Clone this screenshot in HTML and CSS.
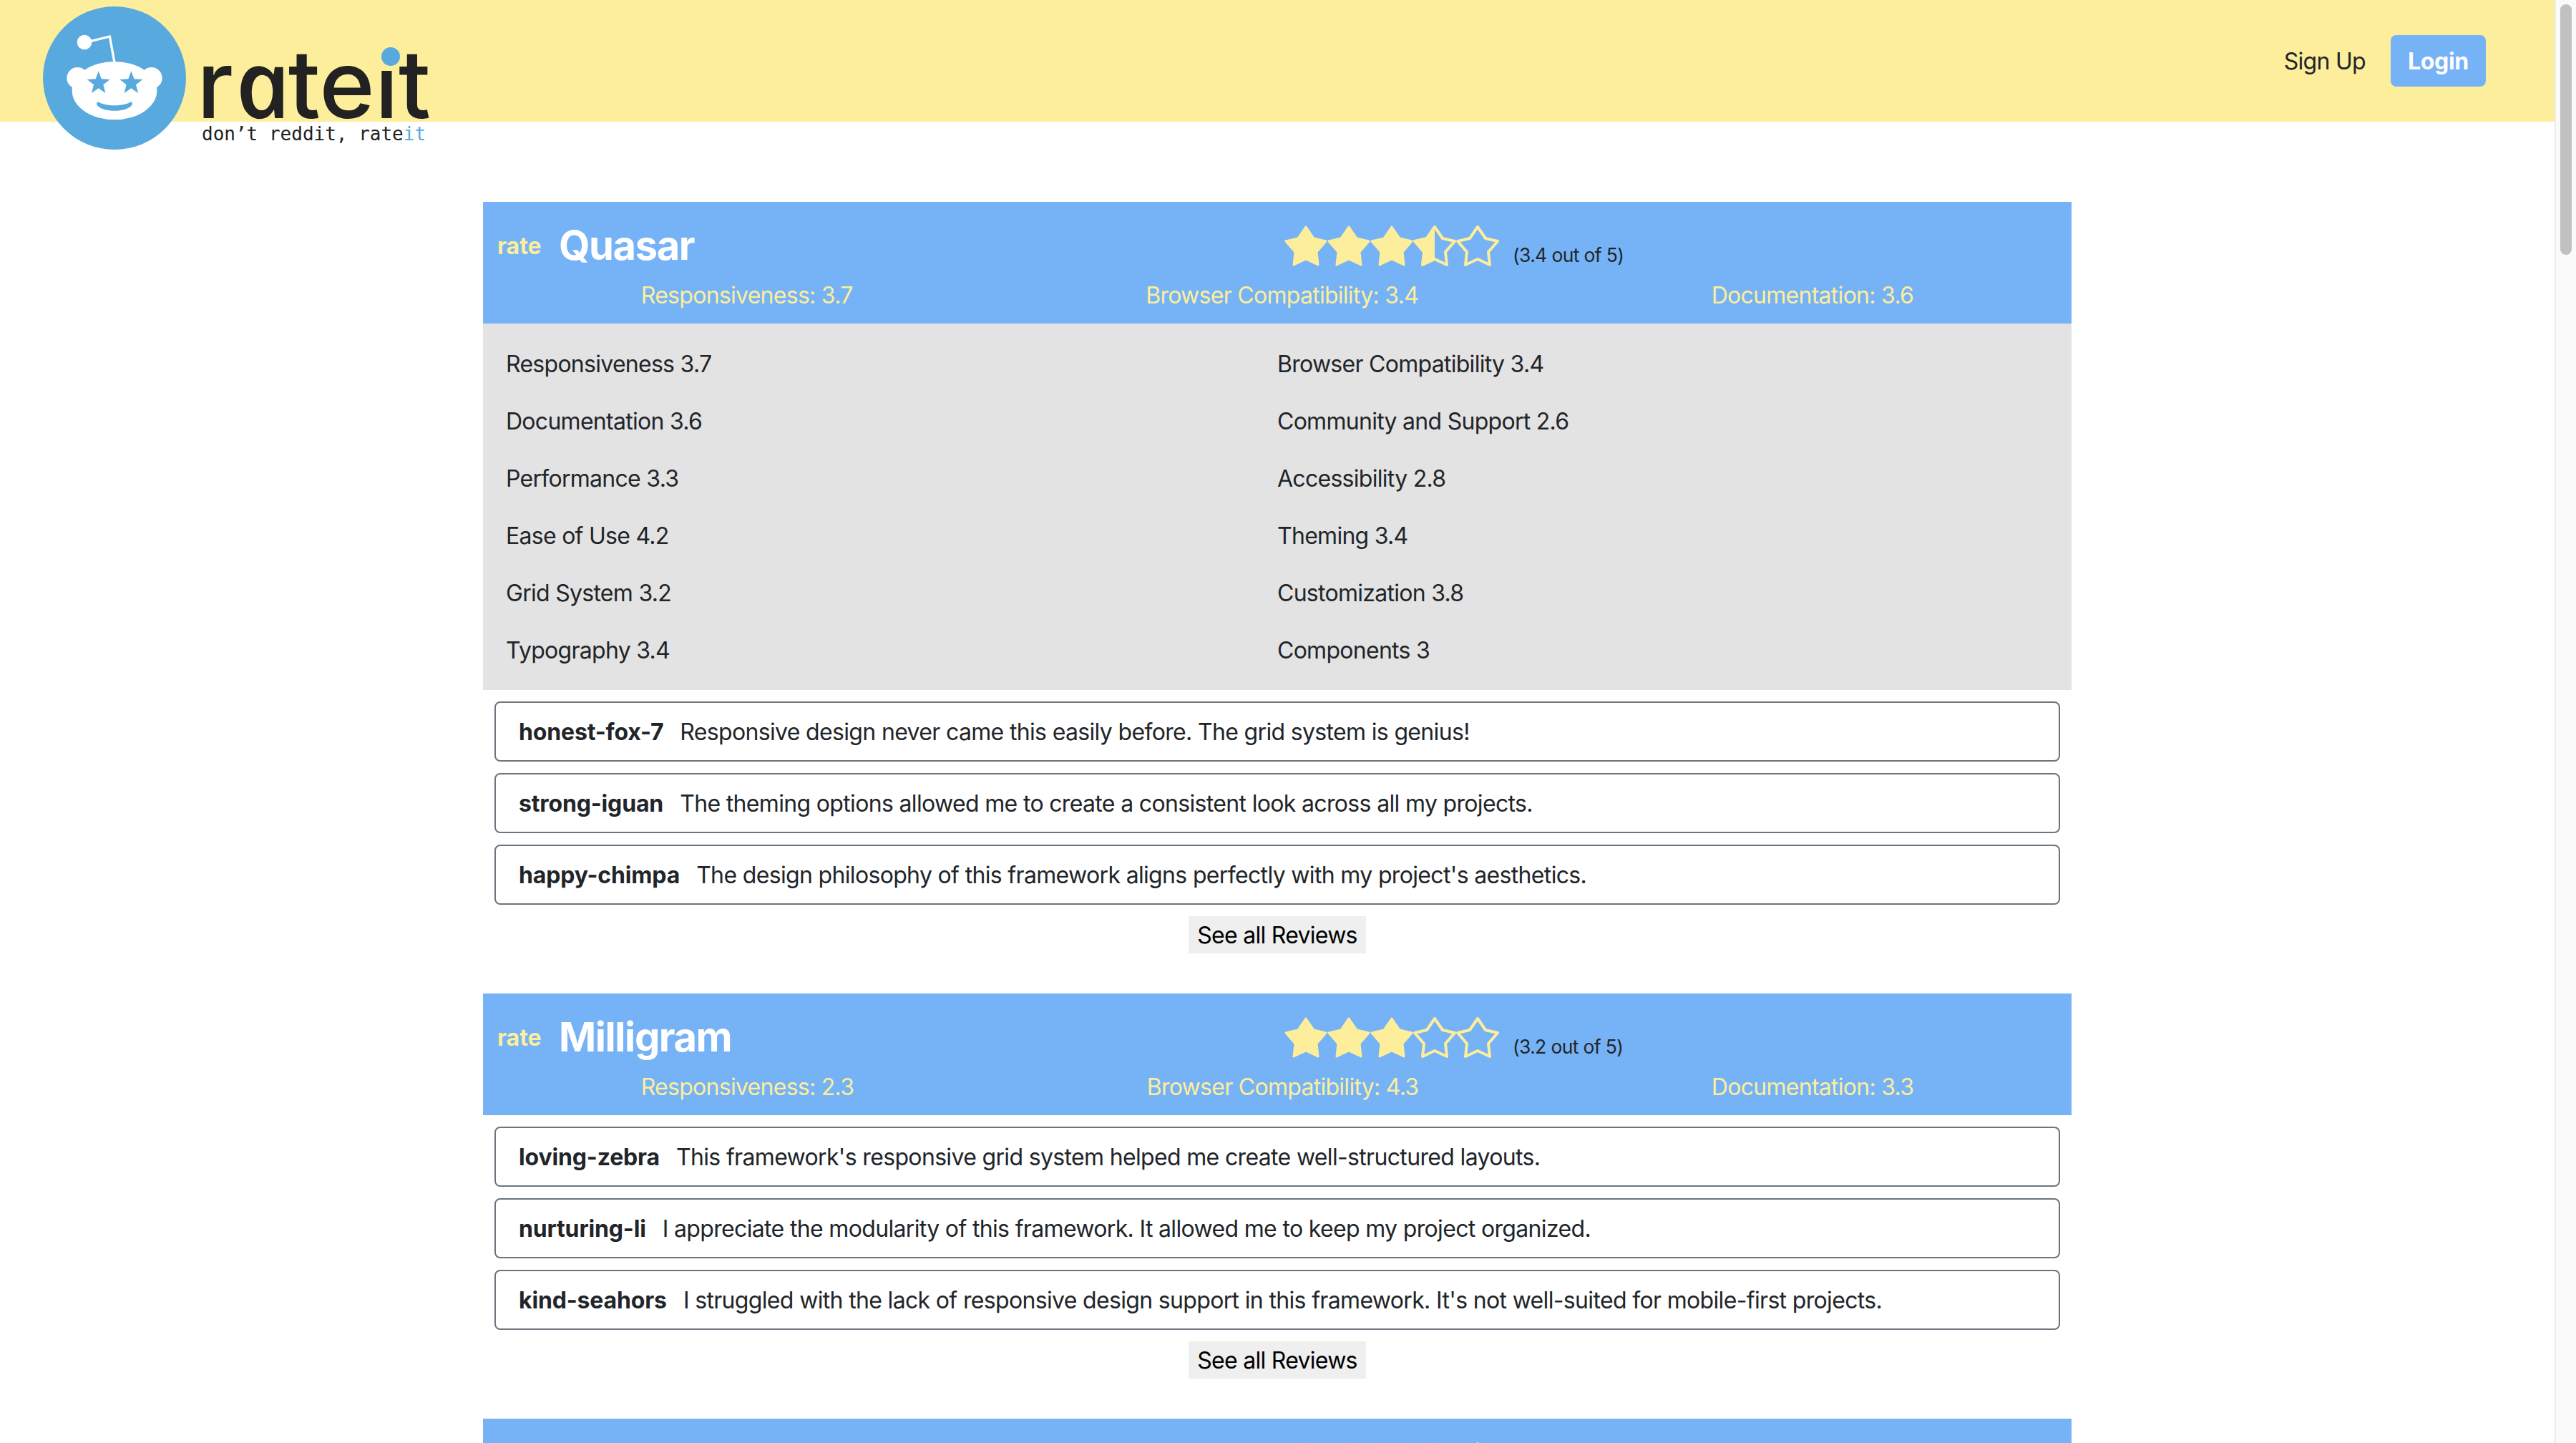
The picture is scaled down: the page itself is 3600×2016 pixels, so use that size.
FILE: index.html
```html
<!DOCTYPE html>
<html lang="en">
<head>
  <meta charset="UTF-8">
  <meta name="viewport" content="width=device-width, initial-scale=1.0">
  <title>rateit</title>
  <link rel="stylesheet" href="styles.css">
</head>
<body>
  <svg class="defs" width="0" height="0">
    <defs>
      <path id="star-shape" d="M30 2 L41 18 L58 22 L45 37 L47 55 L30 47 L13 55 L15 37 L2 22 L19 18 Z"/>
      <clipPath id="left-half"><rect x="0" y="0" width="30" height="56"/></clipPath>
    </defs>
  </svg>

  <div class="window">
    <div class="content">
      <header class="topbar">
        <a class="brand" href="#">
          <svg class="mascot" viewBox="60 27 600 600" width="200" height="200">
            <circle cx="360" cy="327" r="300" fill="#57a9de"/>
            <circle cx="234" cy="177" r="31" fill="#fff"/>
            <path d="M262 172 L340 153 L360 262" fill="none" stroke="#fff" stroke-width="10"/>
            <circle cx="205" cy="327" r="45" fill="#fff"/>
            <circle cx="515" cy="327" r="45" fill="#fff"/>
            <ellipse cx="360" cy="380" rx="178" ry="122" fill="#fff"/>
            <polygon id="eye" fill="#57a9de" points="293,298 305,331 341,333 313,355 322,390 293,370 264,390 273,355 245,333 281,331"/>
            <use href="#eye" x="137"/>
            <path fill="#57a9de" d="M292 427 C320 447 400 447 428 427 Q438 430 433 440 C410 472 310 472 287 440 Q282 430 292 427 Z"/>
          </svg>
          <div class="wordmark">
            <div class="wordmark-name">r<span class="wordmark-a">a</span>te<span class="wordmark-i">i</span>t</div>
            <div class="wordmark-tag">don’t reddit, rate<span class="wordmark-it">it</span></div>
          </div>
        </a>
        <nav class="nav">
          <a class="nav-link" href="#">Sign Up</a>
          <a class="btn-login" href="#">Login</a>
        </nav>
      </header>

      <main class="list">
        <section class="card">
          <div class="card-head">
            <div class="head-top">
              <div class="head-title">
                <span class="rate-link">rate</span>
                <h3 class="name">Quasar</h3>
              </div>
              <div class="rating">
                <svg class="star" viewBox="0 0 60 56"><use href="#star-shape" class="star-fill"/></svg>
                <svg class="star" viewBox="0 0 60 56"><use href="#star-shape" class="star-fill"/></svg>
                <svg class="star" viewBox="0 0 60 56"><use href="#star-shape" class="star-fill"/></svg>
                <svg class="star" viewBox="0 0 60 56"><use href="#star-shape" class="star-line"/><use href="#star-shape" class="star-fill" clip-path="url(#left-half)"/></svg>
                <svg class="star" viewBox="0 0 60 56"><use href="#star-shape" class="star-line"/></svg>
                <span class="rating-text">(3.4 out of 5)</span>
              </div>
            </div>
            <div class="scores">
              <span>Responsiveness: 3.7</span>
              <span>Browser Compatibility: 3.4</span>
              <span>Documentation: 3.6</span>
            </div>
          </div>
          <div class="details">
            <div class="detail">Responsiveness 3.7</div>
            <div class="detail">Browser Compatibility 3.4</div>
            <div class="detail">Documentation 3.6</div>
            <div class="detail">Community and Support 2.6</div>
            <div class="detail">Performance 3.3</div>
            <div class="detail">Accessibility 2.8</div>
            <div class="detail">Ease of Use 4.2</div>
            <div class="detail">Theming 3.4</div>
            <div class="detail">Grid System 3.2</div>
            <div class="detail">Customization 3.8</div>
            <div class="detail">Typography 3.4</div>
            <div class="detail">Components 3</div>
          </div>
          <div class="reviews">
            <div class="review"><strong>honest-fox-7</strong>Responsive design never came this easily before. The grid system is genius!</div>
            <div class="review"><strong>strong-iguan</strong>The theming options allowed me to create a consistent look across all my projects.</div>
            <div class="review"><strong>happy-chimpa</strong>The design philosophy of this framework aligns perfectly with my project's aesthetics.</div>
          </div>
          <div class="more"><button class="more-btn">See all Reviews</button></div>
        </section>

        <section class="card">
          <div class="card-head">
            <div class="head-top">
              <div class="head-title">
                <span class="rate-link">rate</span>
                <h3 class="name">Milligram</h3>
              </div>
              <div class="rating">
                <svg class="star" viewBox="0 0 60 56"><use href="#star-shape" class="star-fill"/></svg>
                <svg class="star" viewBox="0 0 60 56"><use href="#star-shape" class="star-fill"/></svg>
                <svg class="star" viewBox="0 0 60 56"><use href="#star-shape" class="star-fill"/></svg>
                <svg class="star" viewBox="0 0 60 56"><use href="#star-shape" class="star-line"/></svg>
                <svg class="star" viewBox="0 0 60 56"><use href="#star-shape" class="star-line"/></svg>
                <span class="rating-text">(3.2 out of 5)</span>
              </div>
            </div>
            <div class="scores">
              <span>Responsiveness: 2.3</span>
              <span>Browser Compatibility: 4.3</span>
              <span>Documentation: 3.3</span>
            </div>
          </div>
          <div class="reviews">
            <div class="review"><strong>loving-zebra</strong>This framework's responsive grid system helped me create well-structured layouts.</div>
            <div class="review"><strong>nurturing-li</strong>I appreciate the modularity of this framework. It allowed me to keep my project organized.</div>
            <div class="review"><strong>kind-seahors</strong>I struggled with the lack of responsive design support in this framework. It's not well-suited for mobile-first projects.</div>
          </div>
          <div class="more"><button class="more-btn">See all Reviews</button></div>
        </section>

        <section class="card">
          <div class="card-head">
            <div class="head-top">
              <div class="head-title"></div>
              <div class="rating">
                <svg class="star" viewBox="0 0 60 56"><use href="#star-shape" class="star-fill"/></svg>
                <svg class="star" viewBox="0 0 60 56"><use href="#star-shape" class="star-fill"/></svg>
                <svg class="star" viewBox="0 0 60 56"><use href="#star-shape" class="star-fill"/></svg>
                <svg class="star" viewBox="0 0 60 56"><use href="#star-shape" class="star-fill"/></svg>
                <svg class="star" viewBox="0 0 60 56"><use href="#star-shape" class="star-line"/></svg>
              </div>
            </div>
          </div>
        </section>
      </main>
    </div>

    <div class="scrollbar"><div class="scrollbar-thumb"></div></div>
  </div>
</body>
</html>
```

FILE: styles.css
```css
html, body {
  margin: 0;
  padding: 0;
  height: 100%;
  overflow: hidden;
}

body {
  font-family: Inter, "Noto Sans", sans-serif;
  font-size: 32px;
  line-height: 48px;
  letter-spacing: -0.72px;
  color: #212529;
  background: #fff;
}

a {
  color: inherit;
  text-decoration: none;
}

.defs {
  position: absolute;
}

.window {
  display: flex;
  height: 100vh;
  overflow: hidden;
}

.content {
  flex: 1;
  min-width: 0;
}

.scrollbar {
  width: 16px;
  padding: 6px 6px 0;
  background: #fafafa;
  border-left: 2px solid #ececec;
}

.scrollbar-thumb {
  height: 350px;
  background: #c1c1c1;
  border-radius: 8px;
}

/* top bar */
.topbar {
  position: relative;
  display: flex;
  justify-content: flex-end;
  align-items: center;
  height: 170px;
  padding-right: 96px;
  background: #fdee9b;
}

.brand {
  position: absolute;
  left: 60px;
  top: 9px;
  display: flex;
  gap: 15px;
}

.mascot {
  flex: none;
}

.wordmark {
  display: flex;
  flex-direction: column;
}

.wordmark-name {
  margin-top: 44px;
  height: 122px;
  font-size: 132px;
  line-height: 122px;
  font-weight: 500;
  letter-spacing: 0;
  color: #222;
}

/* open sans italic has the one-storey a of the logo, skew stands it up again */
.wordmark-a {
  display: inline-block;
  font-family: "Open Sans", sans-serif;
  font-style: italic;
  font-weight: 600;
  transform: skewX(12deg);
}

.wordmark-i {
  position: relative;
  color: transparent;
  background: linear-gradient(transparent 38.5%, #222 38.5%);
  -webkit-background-clip: text;
  background-clip: text;
}

.wordmark-i::after {
  content: "";
  position: absolute;
  left: 9px;
  top: 29px;
  width: 26px;
  height: 26px;
  border-radius: 50%;
  background: #57a9de;
}

.wordmark-tag {
  margin: -4px 0 0 7px;
  font-family: "DejaVu Sans Mono", monospace;
  font-size: 26px;
  line-height: 32px;
  letter-spacing: 0;
  color: #222;
}

.wordmark-it {
  color: #57a9de;
}

.nav {
  display: flex;
  align-items: center;
  gap: 35px;
}

.nav-link {
  padding-top: 2px;
}

.btn-login {
  padding: 13px 24px 11px;
  font-weight: 700;
  letter-spacing: -0.3px;
  color: #fff;
  background: #76b2f6;
  border-radius: 8px;
}

/* cards */
.list {
  width: 2220px;
  margin: 112px auto 0;
}

.card {
  margin-bottom: 56px;
}

.card-head {
  height: 170px;
  background: #76b2f6;
}

.head-top {
  display: flex;
  height: 107px;
  padding-top: 33px;
  box-sizing: border-box;
}

.head-title {
  display: flex;
  align-items: flex-start;
  width: 1120px;
  padding-left: 20px;
  box-sizing: border-box;
}

.rate-link {
  width: 86px;
  margin-top: 5px;
  font-weight: 700;
  letter-spacing: 0;
  color: #fdee9b;
}

.name {
  margin: 0;
  font-size: 56px;
  line-height: 56px;
  font-weight: 700;
  letter-spacing: -1.4px;
  color: #fff;
}

.rating {
  display: flex;
  align-items: flex-start;
}

.star {
  display: block;
  width: 60px;
  height: 56px;
  overflow: visible;
}

.star-fill {
  fill: #fdee9b;
  stroke: #fdee9b;
  stroke-width: 3;
  stroke-linejoin: round;
}

.star-line {
  fill: none;
  stroke: #fdee9b;
  stroke-width: 4;
  stroke-linejoin: round;
}

.rating-text {
  margin-left: 19px;
  margin-top: 21px;
  font-size: 26.5px;
  line-height: 40px;
  letter-spacing: -0.65px;
}

.scores {
  display: flex;
  justify-content: space-around;
  padding: 0 16px;
  color: #fdee9b;
}

.details {
  display: grid;
  grid-template-columns: 1fr 1fr;
  padding: 16px 32px;
  background: #e3e3e3;
}

.detail {
  height: 80px;
  line-height: 82px;
}

.reviews {
  display: flex;
  flex-direction: column;
  gap: 16px;
  padding: 16px 16px 0;
}

.review {
  padding: 17px 32px 15px;
  border: 2px solid #6c757d;
  border-radius: 8px;
  letter-spacing: -0.66px;
}

.review strong {
  margin-right: 23px;
  font-weight: 700;
  letter-spacing: -0.15px;
}

.more {
  display: flex;
  justify-content: center;
  margin-top: 16px;
}

.more-btn {
  height: 52px;
  padding: 0 12px;
  font-family: inherit;
  font-size: 32px;
  letter-spacing: -0.72px;
  color: #000;
  background: #efefef;
  border: none;
}
```
